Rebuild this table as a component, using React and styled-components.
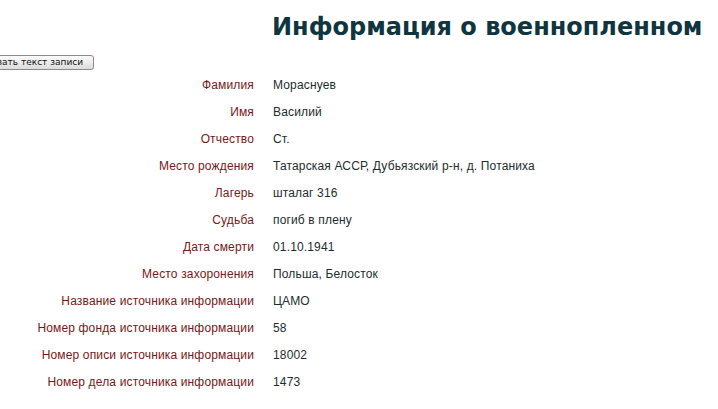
import React from 'react';
import styled, { createGlobalStyle } from 'styled-components';

const Global = createGlobalStyle`
  html, body {
    margin: 0;
    padding: 0;
    background: #fff;
    overflow: hidden;
  }
`;

const Page = styled.div`
  width: 718px;
  height: 409px;
  overflow: hidden;
  font-family: "Liberation Sans", Arial, sans-serif;
`;

const Title = styled.h1`
  margin: 0;
  padding: 12px 0 0 272px;
  font-family: "DejaVu Sans", Verdana, sans-serif;
  font-size: 24px;
  line-height: 30px;
  font-weight: bold;
  color: #0f3540;
  white-space: nowrap;
`;

const Toolbar = styled.div`
  display: flex;
  margin-top: 13px;
  margin-left: -35px;
`;

const Button = styled.button`
  height: 15px;
  padding: 0 10px 0 8px;
  border: 1px solid #8c8c8c;
  border-radius: 3px;
  background: linear-gradient(#fbfbfb, #dcdcdc);
  font-family: "DejaVu Sans", Verdana, sans-serif;
  font-size: 9px;
  line-height: 13px;
  color: #111;
  white-space: nowrap;
`;

const Table = styled.div`
  display: grid;
  grid-template-columns: 254px auto;
  column-gap: 19px;
  margin-top: 2px;
  font-size: 12px;
  letter-spacing: 0.15px;
`;

const Label = styled.div`
  text-align: right;
  color: #761818;
  line-height: 27px;
  white-space: nowrap;
`;

const Value = styled.div`
  color: #1c2c30;
  line-height: 27px;
  white-space: nowrap;
`;

const rows = [
  ['Фамилия', 'Мораснуев'],
  ['Имя', 'Василий'],
  ['Отчество', 'Ст.'],
  ['Место рождения', 'Татарская АССР, Дубьязский р-н, д. Потаниха'],
  ['Лагерь', 'шталаг 316'],
  ['Судьба', 'погиб в плену'],
  ['Дата смерти', '01.10.1941'],
  ['Место захоронения', 'Польша, Белосток'],
  ['Название источника информации', 'ЦАМО'],
  ['Номер фонда источника информации', '58'],
  ['Номер описи источника информации', '18002'],
  ['Номер дела источника информации', '1473'],
];

const App = () => {
  return (
    <Page>
      <Global />
      <Title>Информация о военнопленном</Title>
      <Toolbar>
        <Button>Показать текст записи</Button>
      </Toolbar>
      <Table>
        {rows.map(([label, value]) => (
          <React.Fragment key={label}>
            <Label>{label}</Label>
            <Value>{value}</Value>
          </React.Fragment>
        ))}
      </Table>
    </Page>
  );
};

export default App;
